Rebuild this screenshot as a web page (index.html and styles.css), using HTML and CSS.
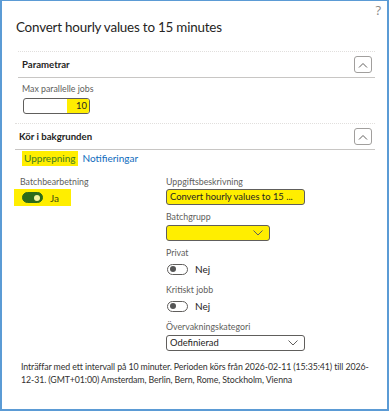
FILE: index.html
```html
<!DOCTYPE html>
<html lang="sv">
<head>
    <meta charset="UTF-8">
    <meta name="viewport" content="width=device-width, initial-scale=1.0">
    <title>Convert hourly values to 15 minutes</title>
    <link rel="stylesheet" href="styles.css">
</head>
<body>
    <div class="dialog">
        <span class="help">?</span>
        <h1 class="title">Convert hourly values to 15 minutes</h1>

        <div class="fasttab first">
            <div class="fasttab-header">
                <span>Parametrar</span>
                <button class="collapse">
                    <svg width="10" height="6" viewBox="0 0 10 6"><path d="M1 5.5 L5 1.5 L9 5.5" fill="none" stroke="#605e5c" stroke-width="1"/></svg>
                </button>
            </div>
            <div class="fasttab-body">
                <label class="field-label">Max parallelle jobs</label>
                <div class="input small"><span class="hl">10</span></div>
            </div>
        </div>

        <div class="fasttab">
            <div class="fasttab-header">
                <span>Kör i bakgrunden</span>
                <button class="collapse">
                    <svg width="10" height="6" viewBox="0 0 10 6"><path d="M1 5.5 L5 1.5 L9 5.5" fill="none" stroke="#605e5c" stroke-width="1"/></svg>
                </button>
            </div>
            <div class="tabs">
                <span class="tab active">Upprepning</span>
                <span class="tab">Notifieringar</span>
            </div>
            <div class="columns">
                <div class="col">
                    <label class="field-label">Batchbearbetning</label>
                    <div class="toggle-row marked">
                        <span class="toggle on"></span>
                        <span>Ja</span>
                    </div>
                </div>
                <div class="col">
                    <label class="field-label">Uppgiftsbeskrivning</label>
                    <div class="input wide filled">Convert hourly values to 15 ...</div>

                    <label class="field-label">Batchgrupp</label>
                    <div class="input select medium filled">
                        <span></span>
                        <svg width="10" height="6" viewBox="0 0 10 6"><path d="M0.5 0.5 L5 5 L9.5 0.5" fill="none" stroke="#605e5c" stroke-width="1"/></svg>
                    </div>

                    <label class="field-label">Privat</label>
                    <div class="toggle-row">
                        <span class="toggle"></span>
                        <span>Nej</span>
                    </div>

                    <label class="field-label">Kritiskt jobb</label>
                    <div class="toggle-row">
                        <span class="toggle"></span>
                        <span>Nej</span>
                    </div>

                    <label class="field-label">Övervakningskategori</label>
                    <div class="input select wide">
                        <span>Odefinierad</span>
                        <svg width="10" height="6" viewBox="0 0 10 6"><path d="M0.5 0.5 L5 5 L9.5 0.5" fill="none" stroke="#605e5c" stroke-width="1"/></svg>
                    </div>
                </div>
            </div>
            <p class="summary">Inträffar med ett intervall på 10 minuter. Perioden körs från 2026-02-11 (15:35:41) till 2026-12-31. (GMT+01:00) Amsterdam, Berlin, Bern, Rome, Stockholm, Vienna</p>
        </div>
    </div>
</body>
</html>
```

FILE: styles.css
```css
body {
    margin: 0;
    font-family: Lato, "Open Sans", Arial, sans-serif;
    color: #252423;
    background: #fff;
}
.dialog {
    position: relative;
    width: 389px;
    height: 411px;
    box-sizing: border-box;
    border: 2px solid #5b9bd5;
    border-top-width: 1px;
    padding: 0 6px 0 13px;
}
.help {
    position: absolute;
    top: 0;
    right: 6px;
    font-family: "Open Sans", sans-serif;
    font-size: 13px;
    color: #8a8886;
}
.title {
    margin: 0;
    padding: 18px 0 0 1px;
    height: 32px;
    font-size: 13.4px;
    letter-spacing: -0.2px;
    font-weight: 400;
}
.fasttab {
    border-top: 1px dotted #e1dfdd;
    margin-right: 6px;
}
.fasttab.first {
    margin-left: 3px;
}
.fasttab-header {
    display: flex;
    align-items: center;
    justify-content: space-between;
    height: 25px;
    padding-left: 4px;
    border-bottom: 1px solid #c8c6c4;
    font-size: 9.6px;
    font-weight: 700;
}
.collapse {
    width: 18px;
    height: 17px;
    padding: 0;
    margin-right: 3px;
    border: 1px solid #a19f9d;
    border-radius: 3px;
    background: #fff;
    display: flex;
    align-items: center;
    justify-content: center;
}
.fasttab-body {
    padding: 4px 0 8px 4px;
    height: 33px;
}
.field-label {
    display: block;
    font-size: 8.8px;
    color: #605e5c;
    line-height: 14px;
}
.input {
    box-sizing: border-box;
    height: 16px;
    border: 1px solid #605e5c;
    border-radius: 3px;
    font-size: 9.4px;
    line-height: 14px;
    padding: 0 3px;
    white-space: nowrap;
    overflow: hidden;
    text-overflow: ellipsis;
}
.input.small {
    width: 67px;
    margin: 2px 0 0 1px;
    text-align: right;
    padding: 0;
}
.hl {
    display: inline-block;
    background: #ffee00;
    padding: 0 3px 0 9px;
    margin-right: -1px;
}
.input.wide {
    width: 139px;
}
.input.medium {
    width: 104px;
}
.input.filled {
    background: #ffee00;
}
.select {
    display: flex;
    align-items: center;
    justify-content: space-between;
    padding-right: 6px;
    margin-top: 1px;
}
.tabs {
    display: flex;
    gap: 5px;
    padding: 1px 0 0 7px;
    height: 15px;
    font-size: 10px;
    line-height: 15px;
}
.tab {
    color: #0f6cbd;
}
.tab.active {
    background: #ffee00;
    color: #3d7a24;
    padding: 0 2px;
}
.columns {
    display: grid;
    grid-template-columns: 146px 1fr;
    padding: 9px 0 0 5px;
}
.col .field-label {
    margin-top: 5px;
}
.col .field-label:first-child {
    margin-top: 0;
}
.toggle-row {
    display: flex;
    align-items: center;
    gap: 7px;
    height: 18px;
    font-size: 10px;
    padding-left: 1px;
}
.toggle-row.marked {
    background: #ffee00;
    width: 49px;
    height: 17px;
    margin-left: -6px;
    padding-left: 8px;
    color: #3d4a10;
}
.toggle {
    position: relative;
    width: 19px;
    height: 9px;
    border: 1px solid #605e5c;
    border-radius: 6px;
    background: #fff;
}
.toggle::after {
    content: "";
    position: absolute;
    top: 1.5px;
    left: 2px;
    width: 6px;
    height: 6px;
    border-radius: 50%;
    background: #555;
}
.toggle.on {
    background: #2c6b1a;
    border-color: #2c6b1a;
}
.toggle.on::after {
    left: auto;
    right: 2px;
    background: #f3f3a0;
}
.summary {
    margin: 9px 6px 0 6px;
    font-size: 8.8px;
    letter-spacing: -0.1px;
    line-height: 13px;
    color: #323130;
}
```
